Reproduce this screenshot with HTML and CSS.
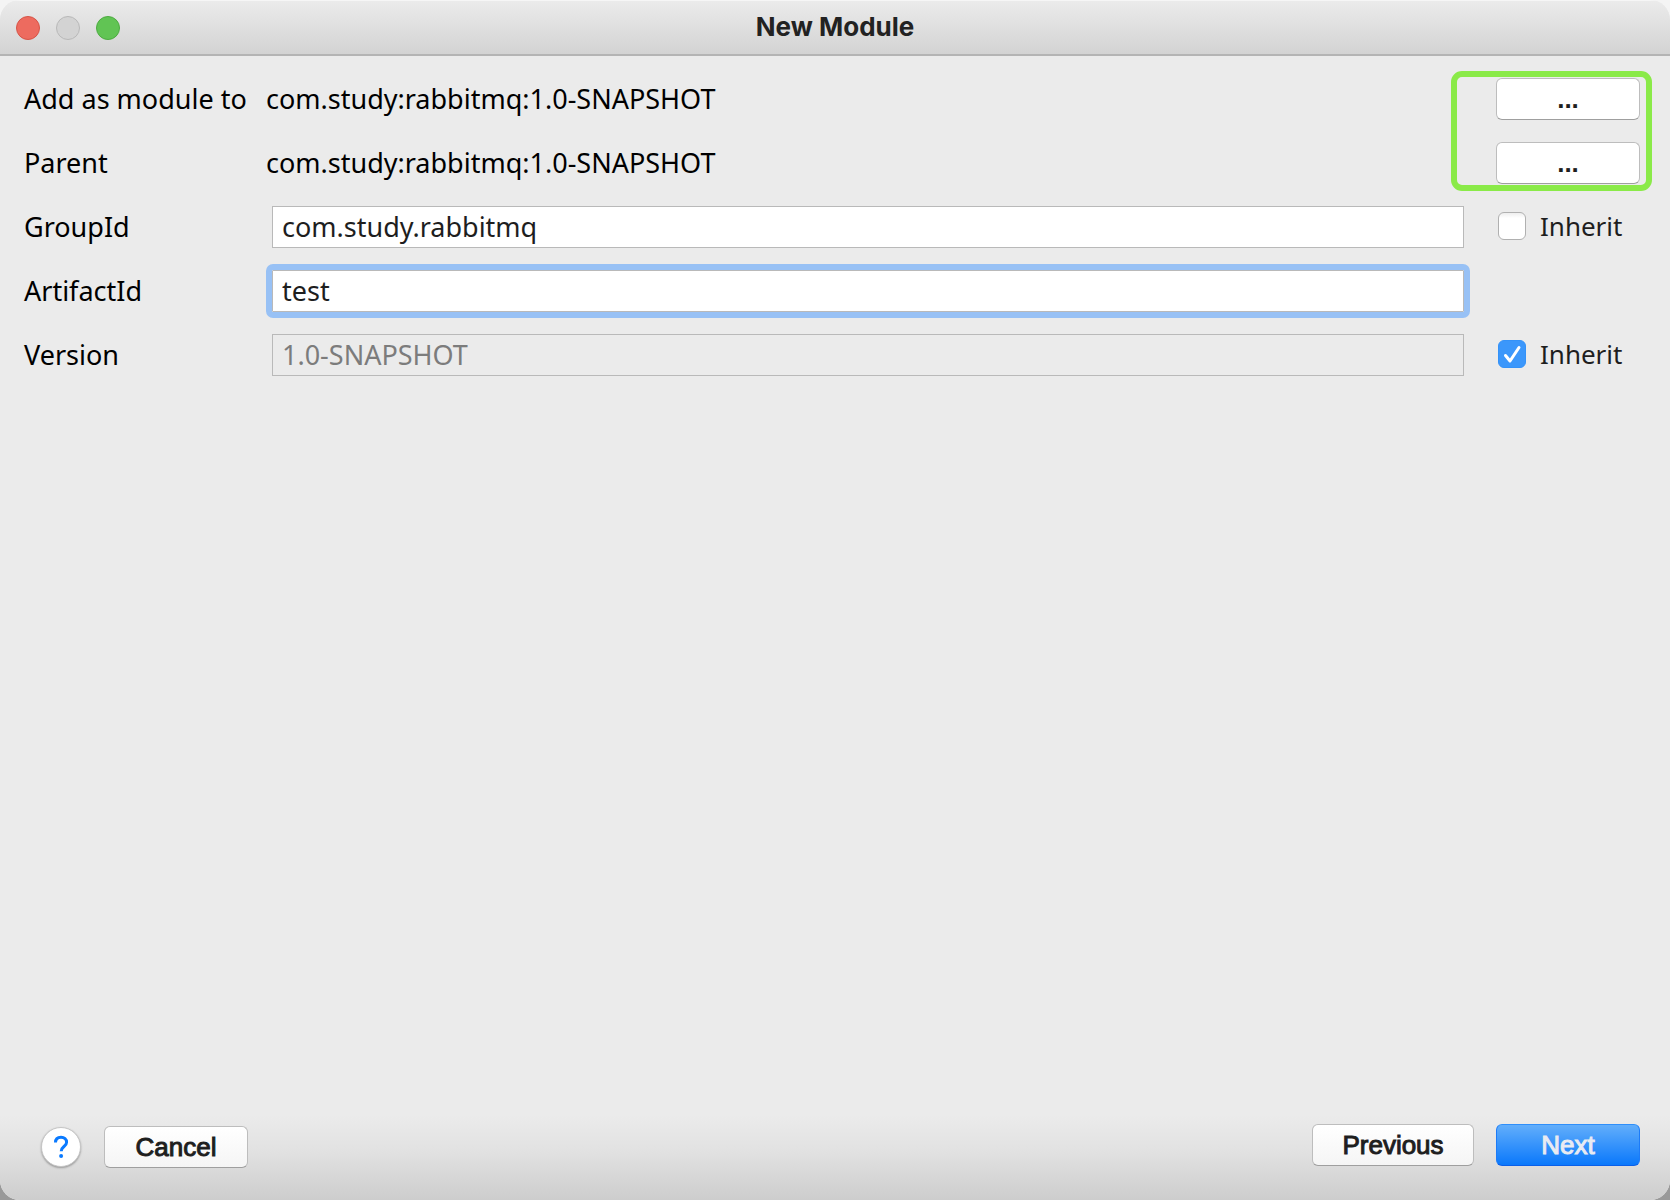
FILE: index.html
```
<!DOCTYPE html>
<html lang="en">
<head>
  <meta charset="UTF-8" />
  <meta name="viewport" content="width=device-width, initial-scale=1.0" />
  <title>New Module</title>
  <link rel="stylesheet" href="styles.css">
</head>
<body>
  <main class="window">
    <header class="titlebar">
      <div class="lights">
        <button type="button" class="light close" aria-label="Close"></button>
        <button type="button" class="light minimize" aria-label="Minimize" disabled></button>
        <button type="button" class="light zoom" aria-label="Zoom"></button>
      </div>
      <h1>New Module</h1>
    </header>

    <form class="module-form" id="module-form">
      <div class="pickers">
        <div class="row">
          <span class="name">Add as module to</span>
          <span class="value">com.study:rabbitmq:1.0-SNAPSHOT</span>
          <button type="button" class="btn browse" aria-label="Choose aggregator">...</button>
        </div>
        <div class="row">
          <span class="name">Parent</span>
          <span class="value">com.study:rabbitmq:1.0-SNAPSHOT</span>
          <button type="button" class="btn browse" aria-label="Choose parent">...</button>
        </div>
      </div>
      <div class="row">
        <label class="name" for="group-id">GroupId</label>
        <input type="text" class="field" id="group-id" value="com.study.rabbitmq" />
        <label class="inherit"><input type="checkbox" id="inherit-group" />Inherit</label>
      </div>
      <div class="row">
        <label class="name" for="artifact-id">ArtifactId</label>
        <input type="text" class="field active" id="artifact-id" value="test" />
      </div>
      <div class="row">
        <label class="name" for="version">Version</label>
        <input type="text" class="field" id="version" value="1.0-SNAPSHOT" disabled />
        <label class="inherit"><input type="checkbox" id="inherit-version" checked />Inherit</label>
      </div>
    </form>

    <footer class="actions">
      <div class="left">
        <button type="button" class="help" aria-label="Help">
          <svg width="16" height="24" viewBox="0 0 16 24" aria-hidden="true">
            <path d="M2.5 7.5C2.5 4 4.7 2.2 8 2.2s5.6 1.9 5.6 5c0 4.4-5.4 4.3-5.4 9" />
            <circle cx="8.1" cy="21" r="2" />
          </svg>
        </button>
        <button type="button" class="btn">Cancel</button>
      </div>
      <div class="right">
        <button type="button" class="btn previous">Previous</button>
        <button type="submit" class="btn primary" form="module-form">Next</button>
      </div>
    </footer>
  </main>
</body>
</html>
```
FILE: styles.css
```
*, *::after { box-sizing: border-box; }
body { margin: 0; background: linear-gradient(#f4f4f4 50%, #999 50%); font-family: "Noto Sans", sans-serif; font-size: 26px; color: #000; }
button, input { font: inherit; margin: 0; }

.window { display: flex; flex-direction: column; min-height: 100vh; background: #ebebeb; border-radius: 20px; overflow: hidden; }

.titlebar { display: grid; grid-template-columns: 1fr auto 1fr; align-items: center; height: 56px; padding: 0 16px; border-bottom: 2px solid #b4b4b4; border-top: 1px solid #f6f6f6; background: linear-gradient(#ebebeb, #d3d3d3); }
.titlebar h1 { margin: 0; padding-bottom: 2px; font-family: Inter, sans-serif; font-size: 26px; font-weight: 700; line-height: 32px; color: #222; }
.lights { display: flex; gap: 16px; }
.light { width: 24px; height: 24px; padding: 0; border: 1px solid; border-radius: 50%; }
.close { background: #ed6b5f; border-color: #d65447; }
.minimize { background: #d3d3d3; border-color: #b8b8b8; }
.zoom { background: #61c454; border-color: #4dab41; }

.module-form { flex: 1; padding: 11px 30px 0 24px; }
.row { display: grid; grid-template-columns: 242px 1fr 144px; align-items: center; height: 64px; }
.name, .value { padding-bottom: 2px; font-size: 27px; white-space: nowrap; }
.field { height: 42px; margin: 0 32px 0 6px; padding: 0 9px 2px; border: 1px solid #b9b9b9; border-radius: 0; background: #fff; font-size: 27px; color: #1e1e1e; }
.field.active { border-radius: 1px; outline: 6px solid #98c1f5; }
.field:disabled { background: #ebebeb; color: #7c7c7c; }

/* highlight around the two browse buttons */
.pickers { position: relative; }
.pickers::after { content: ""; position: absolute; top: 4px; right: -12px; width: 201px; height: 120px; border: 6px solid #8aea48; border-radius: 11px; pointer-events: none; }

.inherit { display: flex; align-items: center; gap: 14px; padding: 0 0 2px 2px; color: #1e1e1e; }
.inherit input { appearance: none; width: 28px; height: 28px; border: 1px solid #b0b0b0; border-radius: 6px; background: linear-gradient(#eee, #fff 5px); }
.inherit input:checked { border-color: #3492f8; background: #3b97fb url('data:image/svg+xml,<svg xmlns="http://www.w3.org/2000/svg" viewBox="0 0 26 26"><path d="M6.5 14.5l4.5 5.5L20 6.5" fill="none" stroke="white" stroke-width="3" stroke-linecap="round" stroke-linejoin="round"/></svg>'); }

.btn { width: 144px; height: 42px; padding: 0; border: 1px solid #bdbdbd; border-bottom-color: #9f9f9f; border-radius: 6px; background: linear-gradient(#fff, #f5f5f5); font-family: "Liberation Sans", sans-serif; color: #1e1e1e; -webkit-text-stroke: 1px; }
.browse { background: #fff; font-weight: 700; -webkit-text-stroke: 0; }
.previous { width: 162px; }
.primary { border-color: #2f8ffa #1c7bf8 #0a5fe8; background: linear-gradient(#62aefb, #0a78fb); color: #e9ebf2; }

.actions { display: flex; justify-content: space-between; padding: 24px 30px 34px 41px; background: linear-gradient(#ebebeb 15%, #e2e2e2 50%, #cdcdcd); }
.left, .right { display: flex; align-items: center; gap: 22px; }
.left { gap: 23px; padding-top: 2px; margin-bottom: -2px; }
.help { display: flex; align-items: center; justify-content: center; width: 40px; height: 40px; padding: 0; border: 1px solid #c6c6c6; border-radius: 50%; background: #fff; box-shadow: 0 1px 2px #999; }
.help path { fill: none; stroke: #0a7aff; stroke-width: 3; }
.help circle { fill: #0a7aff; }
```
